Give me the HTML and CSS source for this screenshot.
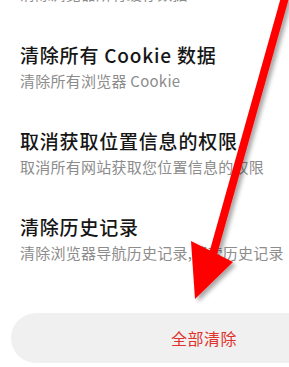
FILE: index.html
```html
<!DOCTYPE html>
<html>
<head>
    <title>清除浏览数据</title>
    <link rel="stylesheet" href="styles.css">
</head>
<body>
    <div id="page">
        <div class="item item-tail">
            <div class="sub">清除浏览器所有缓存数据</div>
        </div>
        <div class="item">
            <div class="title">清除所有 Cookie 数据</div>
            <div class="sub">清除所有浏览器 Cookie</div>
        </div>
        <div class="item">
            <div class="title">取消获取位置信息的权限</div>
            <div class="sub">取消所有网站获取您位置信息的权限</div>
        </div>
        <div class="item">
            <div class="title">清除历史记录</div>
            <div class="sub">清除浏览器导航历史记录,搜索历史记录</div>
        </div>
        <button class="clear-all">全部清除</button>
    </div>

    <svg class="arrow" width="289" height="367" viewBox="0 0 289 367">
        <defs>
            <filter id="shadow" x="-20%" y="-20%" width="140%" height="140%">
                <feDropShadow dx="3" dy="3" stdDeviation="2" flood-color="#000" flood-opacity="0.35"/>
            </filter>
        </defs>
        <g filter="url(#shadow)" fill="#ff0000">
            <line x1="286" y1="-6" x2="213" y2="254" stroke="#ff0000" stroke-width="8"/>
            <polygon points="191,241 213,252 233,262 195,299"/>
        </g>
    </svg>
</body>
</html>
```

FILE: styles.css
```css
body {
    font-family: "Noto Sans CJK SC", "Noto Sans", sans-serif;
    background-color: #fff;
    margin: 0;
    padding: 0;
    width: 289px;
    height: 367px;
    overflow: hidden;
    position: relative;
}

#page {
    display: flex;
    flex-direction: column;
}

.item {
    padding: 17px 20px;
    white-space: nowrap;
}

.item-tail {
    margin-top: -35px;
    padding-bottom: 18px;
}

.title {
    font-size: 19px;
    font-weight: 500;
    line-height: 28px;
    color: #161616;
    letter-spacing: 0.8px;
}

.sub {
    font-size: 15px;
    line-height: 24px;
    color: #8c8c8c;
    letter-spacing: 0.25px;
}

.clear-all {
    margin: 31px 0 0 11px;
    width: 386px;
    height: 50px;
    flex: none;
    border: none;
    border-radius: 25px;
    background-color: #f0f0f0;
    color: #e0322c;
    font-family: "Noto Sans CJK SC", sans-serif;
    font-size: 16px;
    letter-spacing: 0.5px;
    padding: 0;
}

.arrow {
    position: absolute;
    left: 0;
    top: 0;
}
```
